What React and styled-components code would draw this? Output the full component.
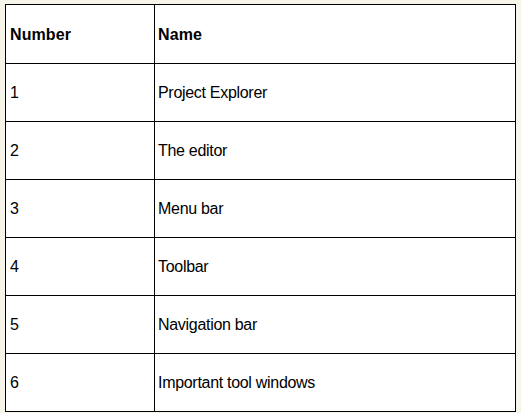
import React from "react";
import styled, { createGlobalStyle } from "styled-components";

const Global = createGlobalStyle`
  html, body {
    margin: 0;
    padding: 0;
    background: #f7f5e9;
  }
  body {
    font-family: Arial, "Liberation Sans", sans-serif;
  }
`;

const Page = styled.div`
  padding: 4px 0 0 5px;
`;

const Table = styled.div`
  display: grid;
  grid-template-columns: 149px 361px;
  grid-template-rows: 59px repeat(6, 58px);
  width: 511px;
  box-sizing: border-box;
  border-left: 1px solid #000;
  border-top: 1px solid #000;
  background: #fff;
`;

const Cell = styled.div`
  box-sizing: border-box;
  border-right: 1px solid #000;
  border-bottom: 1px solid #000;
  display: flex;
  align-items: center;
  padding-left: ${(p) => (p.$first ? "4px" : "3px")};
  padding-top: 1px;
  font-size: 16px;
  font-weight: ${(p) => (p.$head ? 700 : 400)};
  letter-spacing: ${(p) => (p.$head ? "0.1px" : "-0.3px")};
  color: #000;
  white-space: nowrap;
`;

const rows = [
  ["1", "Project Explorer"],
  ["2", "The editor"],
  ["3", "Menu bar"],
  ["4", "Toolbar"],
  ["5", "Navigation bar"],
  ["6", "Important tool windows"],
];

export default function App() {
  return (
    <>
      <Global />
      <Page>
        <Table>
          <Cell $head $first>Number</Cell>
          <Cell $head>Name</Cell>
          {rows.map(([n, name]) => (
            <React.Fragment key={n}>
              <Cell $first>{n}</Cell>
              <Cell>{name}</Cell>
            </React.Fragment>
          ))}
        </Table>
      </Page>
    </>
  );
}
